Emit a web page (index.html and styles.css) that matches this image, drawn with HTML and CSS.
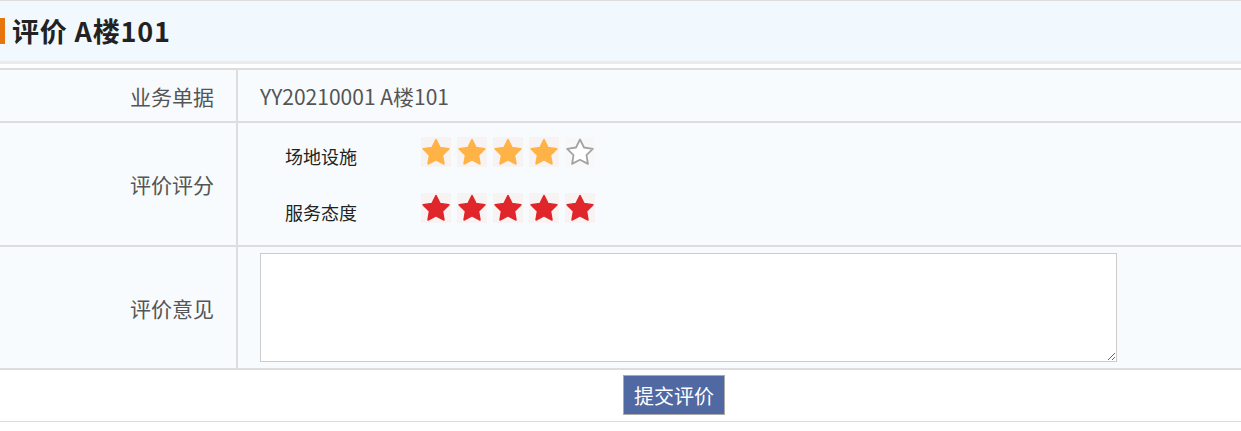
FILE: index.html
```html
<!DOCTYPE html>
<html lang="zh-CN">
<head>
<meta charset="utf-8">
<title>评价 A楼101</title>
<link rel="stylesheet" href="styles.css">
</head>
<body>
<svg class="defs" width="0" height="0" aria-hidden="true">
  <defs>
    <polygon id="star-shape" points="15,2.5 19,10.5 27.84,11.83 21.47,18.1 22.94,26.92 15,22.8 7.06,26.92 8.53,18.1 2.16,11.83 11,10.5"/>
  </defs>
</svg>
<div class="page-header">
  <span class="title-bar"></span>
  <h1 class="title">评价 A楼101</h1>
</div>
<div class="form">
  <div class="form-row row-doc">
    <div class="label">业务单据</div>
    <div class="value">YY20210001 A楼101</div>
  </div>
  <div class="form-row row-rating">
    <div class="label">评价评分</div>
    <div class="value ratings">
      <div class="rating">
        <span class="rating-name">场地设施</span>
        <div class="stars">
          <svg class="star star-orange" viewBox="0 0 30 30"><use href="#star-shape"/></svg>
          <svg class="star star-orange" viewBox="0 0 30 30"><use href="#star-shape"/></svg>
          <svg class="star star-orange" viewBox="0 0 30 30"><use href="#star-shape"/></svg>
          <svg class="star star-orange" viewBox="0 0 30 30"><use href="#star-shape"/></svg>
          <svg class="star star-empty" viewBox="0 0 30 30"><use href="#star-shape"/></svg>
        </div>
      </div>
      <div class="rating">
        <span class="rating-name">服务态度</span>
        <div class="stars">
          <svg class="star star-red" viewBox="0 0 30 30"><use href="#star-shape"/></svg>
          <svg class="star star-red" viewBox="0 0 30 30"><use href="#star-shape"/></svg>
          <svg class="star star-red" viewBox="0 0 30 30"><use href="#star-shape"/></svg>
          <svg class="star star-red" viewBox="0 0 30 30"><use href="#star-shape"/></svg>
          <svg class="star star-red" viewBox="0 0 30 30"><use href="#star-shape"/></svg>
        </div>
      </div>
    </div>
  </div>
  <div class="form-row row-opinion">
    <div class="label">评价意见</div>
    <div class="value">
      <textarea class="opinion"></textarea>
    </div>
  </div>
  <div class="actions">
    <button class="submit" type="button">提交评价</button>
  </div>
</div>
</body>
</html>
```

FILE: styles.css
```css
* { box-sizing: border-box; }

body {
  margin: 0;
  background: #ffffff;
  font-family: "Noto Sans CJK SC", "Noto Sans", sans-serif;
  color: #555;
}

.defs {
  position: absolute;
  width: 0;
  height: 0;
  overflow: hidden;
}

.page-header {
  height: 64px;
  border-top: 1px solid #dddddd;
  border-bottom: 3px solid #ebebeb;
  background: #f1f9fe;
  display: flex;
  align-items: center;
  margin-bottom: 4px;
}

.title-bar {
  width: 5px;
  height: 26px;
  background: #e8760f;
  margin-right: 7px;
}

.title {
  margin: 0;
  font-size: 27px;
  line-height: 32px;
  font-weight: bold;
  color: #222222;
  letter-spacing: 0.8px;
}

.form {
  border-top: 2px solid #dddddd;
}

.form-row {
  display: grid;
  grid-template-columns: 238px 1fr;
  background: #f7fbfd;
  border-bottom: 2px solid #dddddd;
}

.label {
  border-right: 2px solid #dddddd;
  display: flex;
  align-items: center;
  justify-content: flex-end;
  padding-right: 22px;
  font-size: 21px;
  color: #555555;
}

.value {
  padding-left: 22px;
  display: flex;
  align-items: center;
  font-size: 21px;
  color: #555555;
}

.row-doc { height: 53px; }
.row-rating { height: 124px; }
.row-opinion { height: 123px; }

.ratings {
  flex-direction: column;
  align-items: flex-start;
  justify-content: flex-start;
  padding-left: 47px;
  padding-top: 14px;
  gap: 26px;
}

.rating {
  display: flex;
  align-items: center;
  height: 30px;
}

.rating-name {
  width: 136px;
  font-size: 18px;
  color: #222222;
  padding-top: 7px;
}

.stars {
  display: flex;
  gap: 6px;
}

.star {
  width: 30px;
  height: 30px;
  display: block;
  background: #f7f3f3;
  stroke-width: 1.6;
  stroke-linejoin: round;
}

.star-orange { fill: #ffb347; stroke: #ffb347; }
.star-red { fill: #e0262b; stroke: #e0262b; }
.star-empty { background: #f8f8f8; fill: #ffffff; stroke: #a3a3a3; stroke-width: 1.8; }

.opinion {
  width: 857px;
  height: 109px;
  border: 1px solid #cccccc;
  background: #ffffff;
  font-family: inherit;
  margin: 0;
  display: block;
}

.actions {
  height: 52px;
  border-bottom: 1px solid #dddddd;
  padding-left: 623px;
  padding-top: 5px;
}

.submit {
  width: 102px;
  height: 40px;
  background: #5069a3;
  border: 1px solid #aaaaaa;
  color: #ffffff;
  font-family: inherit;
  font-size: 20px;
  padding: 0;
  border-radius: 0;
}
```
